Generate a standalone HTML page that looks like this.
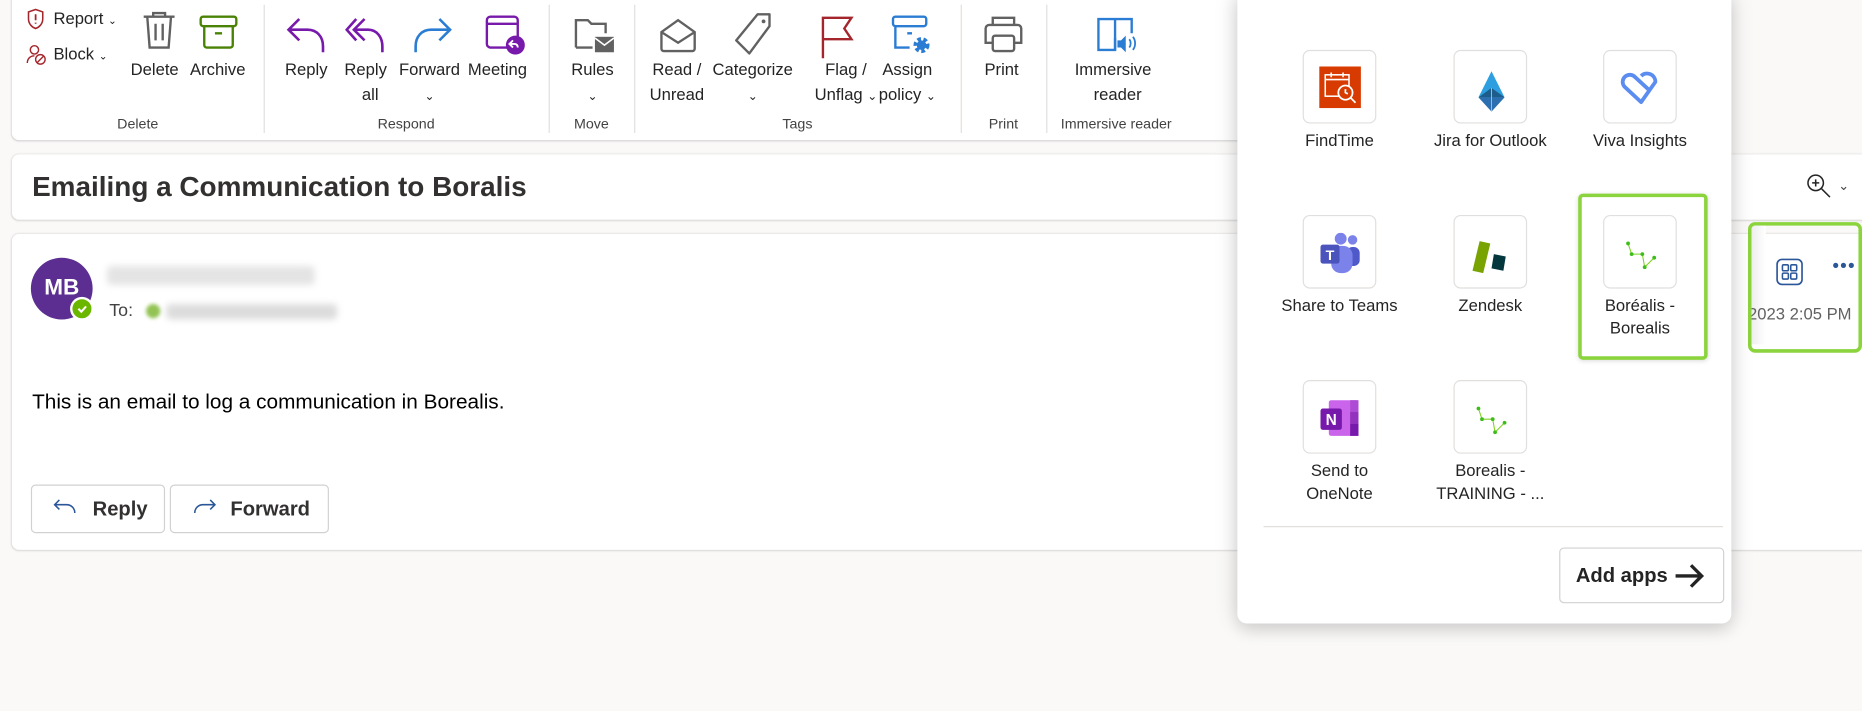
<!DOCTYPE html>
<html><head><meta charset="utf-8"><style>
html,body{margin:0;padding:0;width:1862px;height:711px;overflow:hidden;background:#faf9f8;}
#w{position:absolute;left:0;top:0;width:1568px;height:599px;transform:scale(1.1875);transform-origin:0 0;font-family:"Liberation Sans",sans-serif;color:#242424;}
.a{position:absolute;}
.card{position:absolute;background:#fff;border-radius:6px;box-shadow:0 0 2px rgba(0,0,0,.12),0 1px 2px rgba(0,0,0,.1);}
.lbl{position:absolute;font-size:14px;text-align:center;line-height:21px;white-space:nowrap;color:#242424;}
.gl{position:absolute;top:97px;font-size:12px;color:#424242;text-align:center;}
.sep{position:absolute;top:4px;width:1px;height:108px;background:#e1dfdd;}
.tile{position:absolute;width:60px;height:60px;border:1px solid #e1dfdd;border-radius:6px;background:#fff;}
.tl{position:absolute;font-size:14px;text-align:center;width:140px;line-height:19px;color:#242424;}
.btn{position:absolute;border:1px solid #d1d1d1;border-radius:4px;background:#fff;font-size:17px;font-weight:bold;color:#242424;}
</style></head><body><div id="w">
<!-- ribbon -->
<div class="card" style="left:10px;top:-6px;width:1100px;height:124px;"></div>
<div class="sep" style="left:222px"></div><div class="sep" style="left:462px"></div><div class="sep" style="left:534px"></div><div class="sep" style="left:809px"></div><div class="sep" style="left:881px"></div>

<svg class="a" style="left:22px;top:7px" width="16" height="18" viewBox="0 0 16 18"><path d="M8 1 L14 3 V9 C14 13 11 16 8 17 C5 16 2 13 2 9 V3 Z" fill="none" stroke="#a4262c" stroke-width="1.3"/><path d="M8 5v5M8 12v1" stroke="#a4262c" stroke-width="1.5"/></svg>
<div class="lbl" style="left:45px;top:5px">Report <span style="font-size:9px">&#8964;</span></div>
<svg class="a" style="left:22px;top:37px" width="18" height="18" viewBox="0 0 18 18"><circle cx="7" cy="5" r="3.5" fill="none" stroke="#a4262c" stroke-width="1.2"/><path d="M1 16c0-4 3-6 6-6" fill="none" stroke="#a4262c" stroke-width="1.2"/><circle cx="12" cy="13" r="4" fill="none" stroke="#a4262c" stroke-width="1.2"/><path d="M9.5 15.5l5-5" stroke="#a4262c" stroke-width="1.2"/></svg>
<div class="lbl" style="left:45px;top:35px">Block <span style="font-size:9px">&#8964;</span></div>
<svg class="a" style="left:117px;top:8px" width="34" height="34" viewBox="0 0 34 34"><path d="M4 6h26M12 6V3h10v3M7 6l2 26h16l2-26M14 12v14M20 12v14" fill="none" stroke="#616161" stroke-width="2"/></svg>
<div class="lbl" style="left:110px;top:48px">Delete</div>
<svg class="a" style="left:167px;top:12px" width="34" height="30" viewBox="0 0 34 30"><rect x="2" y="2" width="30" height="8" rx="2" fill="none" stroke="#498205" stroke-width="2"/><path d="M5 10v16a2 2 0 002 2h20a2 2 0 002-2V10M14 16h6" fill="none" stroke="#498205" stroke-width="2"/></svg>
<div class="lbl" style="left:160px;top:48px">Archive</div>
<div class="gl" style="left:10px;width:212px">Delete</div>

<svg class="a" style="left:240px;top:14px" width="36" height="32" viewBox="0 0 36 32"><path d="M12 2L3 11l9 9M3 11h16c8 0 13 6 13 14v5" fill="none" stroke="#7719aa" stroke-width="2.2"/></svg>
<div class="lbl" style="left:240px;top:48px">Reply</div>
<svg class="a" style="left:290px;top:14px" width="36" height="32" viewBox="0 0 36 32"><path d="M10 2L2 11l8 9M17 2L8 11l9 9M8 11h12c7 0 12 6 12 14v5" fill="none" stroke="#7719aa" stroke-width="2.2"/></svg>
<div class="lbl" style="left:290px;top:48px">Reply<br>&nbsp;&nbsp;all</div>
<svg class="a" style="left:346px;top:14px" width="36" height="32" viewBox="0 0 36 32"><path d="M24 2l9 9-9 9M33 11H17C9 11 4 17 4 25v5" fill="none" stroke="#2b7cd3" stroke-width="2.2"/></svg>
<div class="lbl" style="left:336px;top:48px">Forward<br><span style="font-size:10px">&#8964;</span></div>
<svg class="a" style="left:408px;top:12px" width="34" height="34" viewBox="0 0 34 34"><rect x="2" y="2" width="26" height="26" rx="3" fill="none" stroke="#7719aa" stroke-width="2"/><path d="M2 8h26" stroke="#7719aa" stroke-width="2"/><circle cx="26" cy="26" r="8" fill="#7719aa"/><path d="M24 22l-3 3 3 3M21 25h4c2 0 3 1 3 3" fill="none" stroke="#fff" stroke-width="1.6"/></svg>
<div class="lbl" style="left:394px;top:48px">Meeting</div>
<div class="gl" style="left:222px;width:240px">Respond</div>

<svg class="a" style="left:482px;top:12px" width="36" height="34" viewBox="0 0 36 34"><path d="M3 28V5h10l3 3h12v8" fill="none" stroke="#616161" stroke-width="2"/><path d="M3 28h14" stroke="#616161" stroke-width="2"/><rect x="19" y="19" width="16" height="13" fill="#616161"/><path d="M19 20l8 6 8-6" fill="none" stroke="#fff" stroke-width="1.4"/></svg>
<div class="lbl" style="left:481px;top:48px">Rules<br><span style="font-size:10px">&#8964;</span></div>
<div class="gl" style="left:462px;width:72px">Move</div>

<svg class="a" style="left:554px;top:14px" width="34" height="32" viewBox="0 0 34 32"><path d="M3 13L17 3l14 10v14a2 2 0 01-2 2H5a2 2 0 01-2-2z M3 13l14 9 14-9" fill="none" stroke="#616161" stroke-width="2"/></svg>
<div class="lbl" style="left:547px;top:48px">Read /<br>Unread</div>
<svg class="a" style="left:618px;top:10px" width="34" height="38" viewBox="0 0 34 38"><path d="M20 2h10v10L13 35 2 24z" fill="none" stroke="#616161" stroke-width="2" stroke-linejoin="round"/><circle cx="25" cy="8" r="1.6" fill="#616161"/></svg>
<div class="lbl" style="left:600px;top:48px">Categorize<br><span style="font-size:10px">&#8964;</span></div>
<svg class="a" style="left:690px;top:12px" width="30" height="38" viewBox="0 0 30 38"><path d="M3 37V3h24l-6 9 6 9H3" fill="none" stroke="#a4262c" stroke-width="2"/></svg>
<div class="lbl" style="left:686px;top:48px">Flag /<br>Unflag <span style="font-size:10px">&#8964;</span></div>
<svg class="a" style="left:750px;top:12px" width="36" height="36" viewBox="0 0 36 36"><rect x="2" y="2" width="28" height="8" rx="2" fill="none" stroke="#2b7cd3" stroke-width="2"/><path d="M4 10v18h12M14 16h4" fill="none" stroke="#2b7cd3" stroke-width="2"/><circle cx="26" cy="26" r="5" fill="none" stroke="#2b7cd3" stroke-width="3.5" stroke-dasharray="3 2"/><circle cx="26" cy="26" r="4" fill="#2b7cd3"/></svg>
<div class="lbl" style="left:740px;top:48px">Assign<br>policy <span style="font-size:10px">&#8964;</span></div>
<div class="gl" style="left:534px;width:275px">Tags</div>

<svg class="a" style="left:828px;top:12px" width="34" height="34" viewBox="0 0 34 34"><path d="M8 9V3h18v6M5 9h24a3 3 0 013 3v12h-6M8 24H2V12a3 3 0 013-3" fill="none" stroke="#616161" stroke-width="2"/><rect x="8" y="18" width="18" height="13" rx="2" fill="none" stroke="#616161" stroke-width="2"/></svg>
<div class="lbl" style="left:829px;top:48px">Print</div>
<div class="gl" style="left:809px;width:72px">Print</div>

<svg class="a" style="left:922px;top:12px" width="38" height="34" viewBox="0 0 38 34"><path d="M17 4H3v26h14V4zM17 4h14v12" fill="none" stroke="#2b7cd3" stroke-width="2"/><path d="M17 30V20" stroke="#2b7cd3" stroke-width="2"/><path d="M19 22h3l4-4v14l-4-4h-3z" fill="#2b7cd3"/><path d="M29 21c1.5 2 1.5 5 0 7M32 19c2.5 3 2.5 8 0 11" fill="none" stroke="#2b7cd3" stroke-width="1.5"/></svg>
<div class="lbl" style="left:905px;top:48px">Immersive<br>&nbsp;&nbsp;reader</div>
<div class="gl" style="left:881px;width:118px">Immersive reader</div>

<!-- subject -->
<div class="card" style="left:10px;top:130px;width:1570px;height:55px;"></div>
<div class="a" style="left:27px;top:144px;font-size:23.5px;font-weight:bold;color:#323130;">Emailing a Communication to Boralis</div>
<svg class="a" style="left:1521px;top:146px" width="22" height="22" viewBox="0 0 22 22"><circle cx="8" cy="8" r="6.5" fill="none" stroke="#242424" stroke-width="1.3"/><path d="M8 5v6M5 8h6M13 13l7 7" stroke="#242424" stroke-width="1.3"/></svg>
<div class="a" style="left:1548px;top:150px;font-size:11px;color:#424242">&#8964;</div>

<!-- email -->
<div class="card" style="left:10px;top:197px;width:1570px;height:266px;"></div>
<div class="a" style="left:26px;top:217px;width:52px;height:52px;border-radius:50%;background:#5c2e91;color:#fff;font-size:19px;font-weight:bold;line-height:52px;text-align:center;">MB</div>
<div class="a" style="left:59px;top:250px;width:16px;height:16px;border-radius:50%;background:#6bb700;border:2px solid #fff;"></div>
<svg class="a" style="left:63px;top:254px" width="12" height="12"><path d="M3 6l2.5 2.5L9.5 4" fill="none" stroke="#fff" stroke-width="1.7"/></svg>
<div class="a" style="left:90px;top:224px;width:175px;height:16px;background:#e4e4e4;filter:blur(3px);border-radius:4px"></div>
<div class="a" style="left:92px;top:253px;font-size:15px;color:#424242">To:</div>
<div class="a" style="left:123px;top:256px;width:12px;height:12px;border-radius:50%;background:#92c353;filter:blur(1.5px)"></div>
<div class="a" style="left:140px;top:256px;width:144px;height:13px;background:#dcdcdc;filter:blur(3px);border-radius:4px"></div>
<div class="a" style="left:27px;top:328px;font-size:17.5px;color:#000;white-space:nowrap">This is an email to log a communication in Borealis.</div>
<div class="btn" style="left:26px;top:408px;width:111px;height:39px;"></div>
<svg class="a" style="left:44px;top:418px" width="22" height="18"><path d="M6 3L2 7l4 4M2 7h10c4 0 7 3 7 7" fill="none" stroke="#2b579a" stroke-width="1.3"/></svg>
<div class="a" style="left:78px;top:419px;font-size:17px;font-weight:bold;color:#323130">Reply</div>
<div class="btn" style="left:143px;top:408px;width:132px;height:39px;"></div>
<svg class="a" style="left:162px;top:418px" width="22" height="18"><path d="M15 3l4 4-4 4M19 7H9C5 7 2 10 2 14" fill="none" stroke="#2b579a" stroke-width="1.3"/></svg>
<div class="a" style="left:194px;top:419px;font-size:17px;font-weight:bold;color:#323130">Forward</div>

<!-- right highlighted -->
<div class="a" style="left:1472px;top:187px;width:90px;height:104px;border:3px solid #8cd43e;border-radius:6px;overflow:hidden;">
<div class="a" style="left:0;top:0;width:12px;height:100px;background:linear-gradient(90deg,#eee,#fff)"></div>
<svg class="a" style="left:20px;top:27px" width="24" height="24" viewBox="0 0 24 24"><rect x="1.5" y="1.5" width="21" height="21" rx="4" fill="none" stroke="#2b579a" stroke-width="1.4"/><rect x="6" y="6" width="5" height="5" rx="1" fill="none" stroke="#2b579a" stroke-width="1.3"/><rect x="13" y="6" width="5" height="5" rx="1" fill="none" stroke="#2b579a" stroke-width="1.3"/><rect x="6" y="13" width="5" height="5" rx="1" fill="none" stroke="#2b579a" stroke-width="1.3"/><rect x="13" y="13" width="5" height="5" rx="1" fill="none" stroke="#2b579a" stroke-width="1.3"/></svg>
<div class="a" style="left:68px;top:26px;font-size:16px;color:#2b579a;letter-spacing:1px">&#8226;&#8226;&#8226;</div>
<div class="a" style="left:-3px;top:66px;font-size:14px;color:#616161;white-space:nowrap">2023 2:05 PM</div>
</div>

<!-- popup -->
<div class="a" style="left:1042px;top:-8px;width:416px;height:533px;background:#fff;border-radius:8px;box-shadow:0 0 20px rgba(0,0,0,.14),0 6px 14px rgba(0,0,0,.1);"></div>
<div class="tile" style="left:1097px;top:42px"><div class="a" style="left:13px;top:13px;width:35px;height:35px;background:#d83b01"></div>
<svg class="a" style="left:15px;top:15px" width="32" height="32" viewBox="0 0 32 32"><rect x="3" y="5" width="20" height="18" fill="none" stroke="#fff" stroke-width="1.3"/><path d="M3 9h20M8 3v4M18 3v4" stroke="#fff" stroke-width="1.3"/><circle cx="20" cy="20" r="6" fill="#d83b01" stroke="#fff" stroke-width="1.5"/><path d="M20 17v3l2 1M24.5 24.5l4 4" stroke="#fff" stroke-width="1.5"/></svg></div>
<div class="tl" style="left:1058px;top:109px">FindTime</div>
<div class="tile" style="left:1224px;top:42px"><svg class="a" style="left:17px;top:16px" width="28" height="38" viewBox="0 0 28 38"><path d="M14 1L3 23h22z" fill="#2d9fe0"/><path d="M3 23l11-8 11 8z" fill="#1c5d8c"/><path d="M3 23l11 12 11-12z" fill="#2b6fb0"/><path d="M14 15v20" stroke="#8fc4ea" stroke-width=".8"/></svg></div>
<div class="tl" style="left:1185px;top:109px">Jira for Outlook</div>
<div class="tile" style="left:1350px;top:42px"><svg class="a" style="left:13px;top:12px" width="36" height="38" viewBox="0 0 36 38"><path d="M18 9a7 7 0 0112 5l-12 17L4 18a6 6 0 019-8l13 12" fill="none" stroke="#5b8cf0" stroke-width="3.2" stroke-linejoin="round"/></svg></div>
<div class="tl" style="left:1311px;top:109px">Viva Insights</div>

<div class="tile" style="left:1097px;top:181px"><svg class="a" style="left:12px;top:14px" width="38" height="36" viewBox="0 0 38 36"><circle cx="29" cy="6" r="4" fill="#7b83eb"/><rect x="24" y="12" width="11" height="16" rx="5" fill="#5059c9"/><circle cx="19" cy="5" r="5" fill="#7b83eb"/><rect x="11" y="11" width="18" height="23" rx="8" fill="#7b83eb"/><rect x="2" y="10" width="16" height="16" rx="2" fill="#4b53bc"/><text x="10" y="23" font-size="12" font-weight="bold" fill="#fff" text-anchor="middle" font-family="Liberation Sans">T</text></svg></div>
<div class="tl" style="left:1058px;top:248px">Share to Teams</div>
<div class="tile" style="left:1224px;top:181px"><svg class="a" style="left:14px;top:20px" width="36" height="30" viewBox="0 0 36 30"><path d="M7 1l9 2-6 25-9-2z" fill="#78a300"/><path d="M19 12l10 2-2 12-10-2z" fill="#03363d"/></svg></div>
<div class="tl" style="left:1185px;top:248px">Zendesk</div>
<div class="tile" style="left:1350px;top:181px"><svg class="a" style="left:17px;top:20px" width="30" height="26" viewBox="0 0 30 26"><path d="M3 3l3 9h9l2 11 8-8" fill="none" stroke="#7ed321" stroke-width=".9"/><g fill="#3dbd1a"><circle cx="3" cy="3" r="1.6"/><circle cx="6" cy="12" r="1.6"/><circle cx="15" cy="12" r="1.6"/><circle cx="17" cy="23" r="1.6"/><circle cx="25" cy="15" r="1.6"/></g></svg></div>
<div class="tl" style="left:1311px;top:248px">Boréalis -<br>Borealis</div>
<div class="a" style="left:1329px;top:163px;width:103px;height:134px;border:3px solid #8cd43e;border-radius:4px;box-shadow:0 1px 4px rgba(0,0,0,.15)"></div>

<div class="tile" style="left:1097px;top:320px"><svg class="a" style="left:13px;top:13px" width="36" height="36" viewBox="0 0 36 36"><rect x="8" y="3" width="25" height="30" rx="2" fill="#ca64ea"/><rect x="26" y="3" width="7" height="30" fill="#ae4bd5"/><rect x="26" y="13" width="7" height="10" fill="#9332bf"/><rect x="26" y="23" width="7" height="10" fill="#7719aa"/><rect x="1" y="10" width="18" height="18" rx="2" fill="#7719aa"/><text x="10" y="24" font-size="13" font-weight="bold" fill="#fff" text-anchor="middle" font-family="Liberation Sans">N</text></svg></div>
<div class="tl" style="left:1058px;top:387px">Send to<br>OneNote</div>
<div class="tile" style="left:1224px;top:320px"><svg class="a" style="left:17px;top:20px" width="30" height="26" viewBox="0 0 30 26"><path d="M3 3l3 9h9l2 11 8-8" fill="none" stroke="#7ed321" stroke-width=".9"/><g fill="#3dbd1a"><circle cx="3" cy="3" r="1.6"/><circle cx="6" cy="12" r="1.6"/><circle cx="15" cy="12" r="1.6"/><circle cx="17" cy="23" r="1.6"/><circle cx="25" cy="15" r="1.6"/></g></svg></div>
<div class="tl" style="left:1185px;top:387px">Borealis -<br>TRAINING - ...</div>

<div class="a" style="left:1064px;top:443px;width:387px;height:1px;background:#e1dfdd"></div>
<div class="btn" style="left:1313px;top:461px;width:137px;height:45px;"></div>
<div class="a" style="left:1327px;top:475px;font-size:17px;font-weight:bold;color:#242424">Add apps</div>
<svg class="a" style="left:1409px;top:474px" width="28" height="22" viewBox="0 0 28 22"><path d="M2 11h22M15 2l9 9-9 9" fill="none" stroke="#242424" stroke-width="2.8"/></svg>
</div></body></html>
